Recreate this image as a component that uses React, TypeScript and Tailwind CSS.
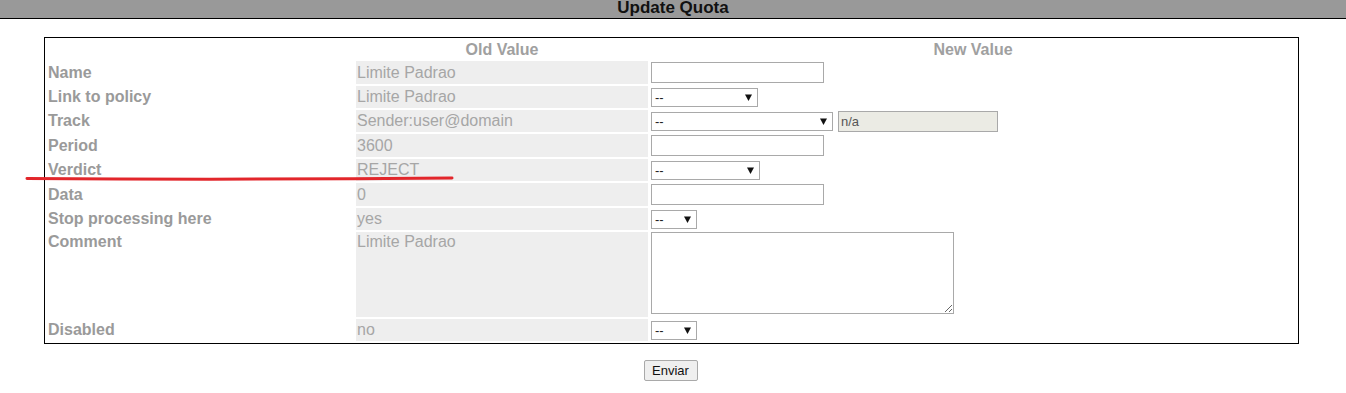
import type { ReactNode } from "react";

const font = { fontFamily: '"Liberation Sans", Arial, sans-serif' };

function TextBox({ w = 173 }: { w?: number }) {
  return (
    <input
      type="text"
      className="h-[21px] border border-[#a9a9a9] bg-white px-[2px] text-[13px] outline-none"
      style={{ width: w }}
    />
  );
}

function Sel({ w }: { w: number }) {
  return (
    <div className="relative h-[19px]" style={{ width: w }}>
      <select className="h-full w-full appearance-none border border-[#a9a9a9] bg-white pl-[3px] text-[13px] text-[#222] outline-none">
        <option>--</option>
      </select>
      <svg
        className="pointer-events-none absolute right-[6px] top-[6px]"
        width="7"
        height="7"
        viewBox="0 0 7 7"
      >
        <polygon points="0,0.5 7,0.5 3.5,7" fill="#111" />
      </svg>
    </div>
  );
}

type Row = { label: string; old: string; field: ReactNode; top?: boolean };

const rows: Row[] = [
  { label: "Name", old: "Limite Padrao", field: <TextBox /> },
  { label: "Link to policy", old: "Limite Padrao", field: <Sel w={107} /> },
  {
    label: "Track",
    old: "Sender:user@domain",
    field: (
      <>
        <Sel w={182} />
        <input
          type="text"
          disabled
          value="n/a"
          readOnly
          className="ml-[5px] h-[21px] w-[160px] border border-[#a9a9a9] bg-[#ebebe4] px-[2px] text-[13px] text-[#555]"
        />
      </>
    ),
  },
  { label: "Period", old: "3600", field: <TextBox /> },
  { label: "Verdict", old: "REJECT", field: <Sel w={109} /> },
  { label: "Data", old: "0", field: <TextBox /> },
  { label: "Stop processing here", old: "yes", field: <Sel w={46} /> },
  {
    label: "Comment",
    old: "Limite Padrao",
    top: true,
    field: (
      <textarea className="h-[82px] w-[303px] resize border border-[#a9a9a9] bg-white text-[13px] outline-none" />
    ),
  },
  { label: "Disabled", old: "no", field: <Sel w={46} /> },
];

export default function App() {
  return (
    <div className="relative min-h-[393px] bg-white" style={font}>
      <div className="h-[19px] border-b border-black bg-[#999999] text-center text-[17px] font-bold leading-[16px] text-[#111]">
        Update Quota
      </div>

      <div className="ml-[44px] mt-[18px] w-[1255px] border border-black">
        <div className="grid grid-cols-[307px_292px_1fr] grid-rows-[19px_23px_22px_22px_23px_22px_23px_22px_85px_22px] gap-[2px] p-[2px] text-[16px] leading-[18px]">
          <div />
          <div className="flex items-center justify-center font-bold text-[#a0a0a0]">Old Value</div>
          <div className="flex items-center justify-center font-bold text-[#a0a0a0]">New Value</div>
          {rows.map((r) => (
            <>
              <div
                key={r.label + "-l"}
                className={`flex pl-[1px] font-bold text-[#9a9a9a] ${r.top ? "items-start pt-[1px]" : "items-center"}`}
              >
                {r.label}
              </div>
              <div
                key={r.label + "-o"}
                className={`flex bg-[#eeeeee] pl-[1px] text-[#a6a6a6] ${r.top ? "items-start pt-[1px]" : "items-center"}`}
              >
                {r.old}
              </div>
              <div
                key={r.label + "-n"}
                className={`flex pl-[1px] ${r.top ? "items-start" : "items-center"}`}
              >
                {r.field}
              </div>
            </>
          ))}
        </div>
      </div>

      <div className="mt-[16px] flex justify-center pr-[5px]">
        <button className="h-[21px] w-[54px] rounded-[2px] border border-[#a9a9a9] bg-[#efefef] text-[13px] text-[#111]">
          Enviar
        </button>
      </div>

      {/* red marker stroke drawn over the Verdict row */}
      <svg
        className="pointer-events-none absolute left-0 top-0"
        width="1346"
        height="393"
        viewBox="0 0 1346 393"
      >
        <path
          d="M27 178.5 Q240 180 452 178"
          stroke="#e2262b"
          strokeWidth="3"
          strokeLinecap="round"
          fill="none"
        />
      </svg>
    </div>
  );
}
